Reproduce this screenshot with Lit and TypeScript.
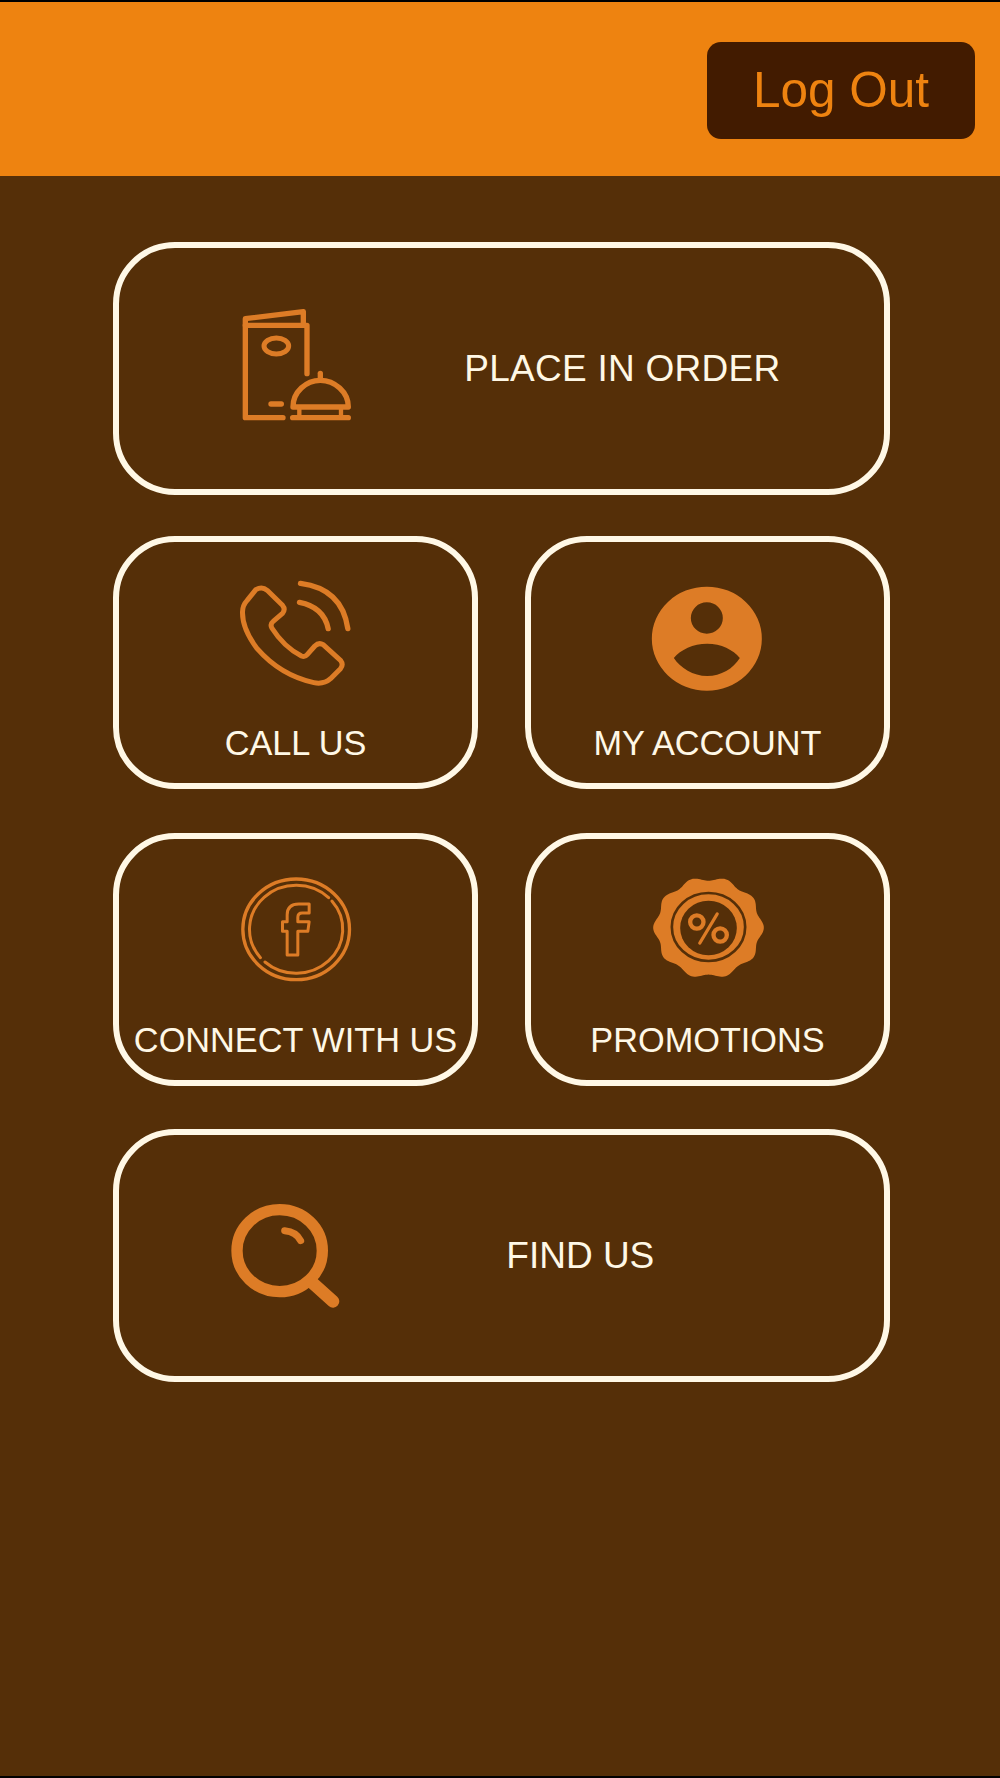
import { LitElement, html, css } from "lit";
import { customElement } from "lit/decorators.js";

function badgePath(cx: number, cy: number, rx: number, ry: number): string {
  const pts: string[] = [];
  for (let i = 0; i < 240; i++) {
    const t = (i / 240) * Math.PI * 2;
    const r = 0.96 + 0.04 * Math.cos(10 * t);
    pts.push(`${(cx + Math.cos(t) * rx * r).toFixed(1)} ${(cy + Math.sin(t) * ry * r).toFixed(1)}`);
  }
  return "M" + pts.join("L") + "Z";
}

const menuIcon = html`<svg class="ic" style="width:111.67px;height:123.67px" viewBox="425 230 335 371" fill="none" stroke="#dd7c26" stroke-width="16" stroke-linecap="round" stroke-linejoin="round">
  <path d="M551 562H438V265L612 244V285"/>
  <path d="M438 285H623V430"/>
  <ellipse cx="531" cy="347" rx="37" ry="24" stroke-width="15"/>
  <path d="M515 521H546" stroke-width="16"/>
  <path d="M581 530C581 485 620 450 663 450C706 450 747 485 747 530Z" stroke-width="16"/>
  <path d="M663 429V448" stroke-width="16"/>
  <path d="M600 535V560M725 535V560" stroke-width="13"/>
  <path d="M580 562H747" stroke-width="16"/>
</svg>`;

const phoneIcon = html`<svg class="ic" viewBox="406.5 152 360 345" fill="none" stroke="#dd7c26" stroke-width="15" stroke-linecap="round" stroke-linejoin="round">
  <path d="M466 193Q485 182 500 195L546 240Q556 252 546 264L518 288Q508 296 514 308Q550 365 603 392Q613 396 620 388L643 362Q655 350 668 358L720 405Q730 418 720 430L690 460Q670 478 640 472Q540 450 470 370Q425 310 426 260Q426 240 440 225Z"/>
  <path d="M600 174Q725 190 742 310" stroke-width="16"/>
  <path d="M597 231Q670 245 683 310" stroke-width="16"/>
</svg>`;

const accountIcon = html`<svg class="ic" viewBox="412.5 152 360 345">
  <path fill="#dd7c26" fill-rule="evenodd" d="M424 340a165 156 0 1 0 330 0a165 156 0 1 0 -330 0Z
    M541 278a48 47 0 1 0 96 0a48 47 0 1 0 -96 0Z
    M490 398C510 373 548 355 590 355C632 355 668 373 688 398C668 430 632 452 590 452C548 452 510 428 490 398Z"/>
</svg>`;

const fbIcon = html`<svg class="ic" viewBox="406.5 142 360 345" fill="none" stroke="#dd7c26" stroke-linecap="round" stroke-linejoin="round">
  <ellipse cx="587" cy="311" rx="160" ry="151" stroke-width="10"/>
  <path d="M684.3 216.1A140 132 0 0 0 479.8 395.9" stroke-width="9"/>
  <path d="M694.2 226.1A140 132 0 0 1 493.3 409" stroke-width="9"/>
  <path d="M560 388V317H546V288H560V268Q560 235 595 235H626V262H605Q592 262 592 275V288H626L622 317H592V388Z" stroke-width="9"/>
</svg>`;

const promoIcon = html`<svg class="ic" viewBox="412.5 142 360 345">
  <path fill="#dd7c26" d="${badgePath(594, 306, 166, 153)}"/>
  <ellipse cx="594" cy="304" rx="110" ry="102" fill="none" stroke="#552f08" stroke-width="8"/>
  <ellipse cx="594" cy="307" rx="85" ry="82" fill="#552f08"/>
  <g fill="none" stroke="#dd7c26" stroke-linecap="round">
    <ellipse cx="559" cy="289" rx="20" ry="20" stroke-width="13"/>
    <ellipse cx="629" cy="328" rx="20" ry="20" stroke-width="13"/>
    <path d="M620 265L568 352" stroke-width="10"/>
  </g>
</svg>`;

const searchIcon = html`<svg class="ic" style="width:115px;height:112px" viewBox="385 240 345 336" fill="none" stroke="#dd7c26" stroke-linecap="round">
  <ellipse cx="540" cy="392" rx="128" ry="123" stroke-width="34"/>
  <path d="M640 490L700 544" stroke-width="38"/>
  <path d="M555 332Q590 335 603 362" stroke-width="21"/>
</svg>`;

@customElement("app-root")
export class AppRoot extends LitElement {
  static styles = css`
    :host {
      display: block;
      font-family: "Liberation Sans", Arial, sans-serif;
    }
    .page {
      box-sizing: border-box;
      height: 1778px;
      border-top: 2px solid #000;
      border-bottom: 2px solid #000;
      background: #552f08;
      display: flex;
      flex-direction: column;
    }
    .header {
      height: 174px;
      flex: none;
      background: #ee8310;
      display: flex;
      align-items: flex-start;
      justify-content: flex-end;
      padding: 40px 25px 0 0;
      box-sizing: border-box;
    }
    .logout {
      width: 268px;
      height: 97px;
      border-radius: 14px;
      background: #421b00;
      color: #ee8310;
      font-size: 49.5px;
      padding-bottom: 2px;
      box-sizing: border-box;
      display: flex;
      align-items: center;
      justify-content: center;
    }
    .stack {
      display: flex;
      flex-direction: column;
      width: 777px;
      padding: 66px 0 0 113px;
    }
    .row {
      display: flex;
      gap: 47px;
      margin-top: 43px;
    }
    .row.first { margin-top: 0; }
    .row.second { margin-top: 41px; }
    .row.third { margin-top: 44px; }
    .card {
      box-sizing: border-box;
      height: 253px;
      border: 6px solid #fff8e6;
      border-radius: 62px;
      color: #fff8e6;
      white-space: nowrap;
    }
    .wide {
      width: 777px;
      display: flex;
      align-items: center;
      font-size: 37px;
    }
    .menu { padding-left: 122px; gap: 111.7px; letter-spacing: 0.25px; }
    .find { padding-left: 109.3px; gap: 163px; }
    .small {
      width: 365px;
      display: flex;
      flex-direction: column;
      align-items: center;
      padding-top: 34px;
      font-size: 34.3px;
    }
    .ic { display: block; flex: none; width: 120px; height: 115px; }
    .label { line-height: 40px; margin-top: 32px; }
  `;

  render() {
    return html`
      <div class="page">
        <div class="header"><div class="logout">Log Out</div></div>
        <div class="stack">
          <div class="row first">
            <div class="card wide menu">${menuIcon}<span>PLACE IN ORDER</span></div>
          </div>
          <div class="row second">
            <div class="card small">${phoneIcon}<span class="label">CALL US</span></div>
            <div class="card small">${accountIcon}<span class="label">MY ACCOUNT</span></div>
          </div>
          <div class="row third">
            <div class="card small">${fbIcon}<span class="label">CONNECT WITH US</span></div>
            <div class="card small">${promoIcon}<span class="label">PROMOTIONS</span></div>
          </div>
          <div class="row">
            <div class="card wide find">${searchIcon}<span>FIND US</span></div>
          </div>
        </div>
      </div>
    `;
  }
}
